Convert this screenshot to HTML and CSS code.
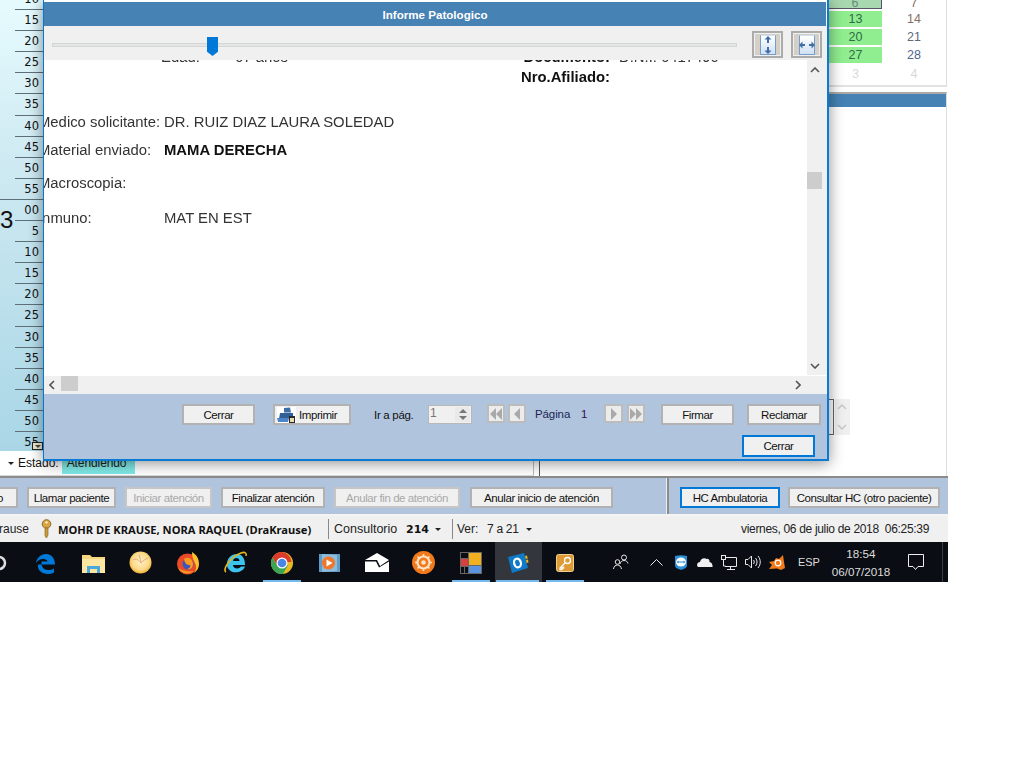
FILE: index.html
```html
<!DOCTYPE html>
<html lang="es">
<head>
<meta charset="utf-8">
<title>Informe Patologico</title>
<link rel="stylesheet" href="styles.css">
</head>
<body>
<div class="screen">
  <div class="workspace">
    <div class="agenda">
      <div class="ruler">
        <div class="tick">10</div><div class="tick">15</div><div class="tick">20</div><div class="tick">25</div><div class="tick">30</div><div class="tick">35</div><div class="tick">40</div><div class="tick">45</div><div class="tick">50</div><div class="tick hour-end">55</div>
        <div class="tick">00</div><div class="tick">5</div><div class="tick">10</div><div class="tick">15</div><div class="tick">20</div><div class="tick">25</div><div class="tick">30</div><div class="tick">35</div><div class="tick">40</div><div class="tick">45</div><div class="tick">50</div><div class="tick">55</div>
        <span class="hour">3</span>
        <span class="more"><i class="more-tri"></i></span>
      </div>
      <div class="estado">
        <span class="caret"></span><span class="estado-label">Estado:</span><span class="estado-val">Atendiendo</span>
      </div>
    </div>
    <div class="side">
      <div class="calendar">
        <div class="cal-row cal-first"><span class="day green today">6</span><span class="day c1">7</span></div>
        <div class="cal-row"><span class="day green">13</span><span class="day c1">14</span></div>
        <div class="cal-row"><span class="day green">20</span><span class="day c2">21</span></div>
        <div class="cal-row"><span class="day green">27</span><span class="day c3">28</span></div>
        <div class="cal-row cal-last"><span class="day muted">3</span><span class="day muted">4</span></div>
      </div>
      <div class="panel">
        <div class="panel-head"></div>
        <div class="panel-ctl">
          <span class="ctl-box"></span>
          <div class="spin-ghost">
            <svg width="14" height="36" viewBox="0 0 14 36"><path d="M3 10l4-4 4 4M3 26l4 4 4-4" fill="none" stroke="#c8c8c8" stroke-width="1.5"/></svg>
          </div>
        </div>
      </div>
    </div>
  </div>

  <div class="actions">
    <div class="act-left">
      <button class="btn act-0">o</button>
      <button class="btn act-1">Llamar paciente</button>
      <button class="btn off act-2">Iniciar atención</button>
      <button class="btn act-3">Finalizar atención</button>
      <button class="btn off act-4">Anular fin de atención</button>
      <button class="btn act-5">Anular inicio de atención</button>
    </div>
    <div class="act-right">
      <button class="btn focus act-6">HC Ambulatoria</button>
      <button class="btn act-7">Consultar HC (otro paciente)</button>
    </div>
  </div>

  <div class="statusbar">
    <span class="st-user">Krause</span>
    <svg class="st-key" width="13" height="20" viewBox="0 0 13 20"><circle cx="6.5" cy="5" r="4.3" fill="#d9a441" stroke="#8a6a25"/><circle cx="6.5" cy="3.4" r="1.2" fill="#fff2c8"/><path d="M5 9h3v7l-1.500 3L5 17z" fill="#c99a3c" stroke="#8a6a25" stroke-width=".7"/></svg>
    <b class="st-name">MOHR DE KRAUSE, NORA RAQUEL (DraKrause)</b>
    <span class="st-sep st-sep1"></span>
    <span class="st-cons">Consultorio</span><b class="st-num">214</b><span class="caret st-caret"></span>
    <span class="st-sep st-sep2"></span>
    <span class="st-ver">Ver:</span><span class="st-range">7 a 21</span><span class="caret st-caret"></span>
    <span class="st-date">viernes, 06 de julio de 2018&nbsp; 06:25:39</span>
  </div>

  <div class="taskbar">
    <div class="apps">
      <div class="slot"><svg width="24" height="24" viewBox="0 0 24 24"><circle cx="12" cy="12" r="6" fill="none" stroke="#ddd" stroke-width="2.500"/></svg></div>
      <div class="slot"><svg width="22" height="22" viewBox="0 0 22 22"><path d="M3 12.500h17C20 6 16 2 11 2 6 2 1.500 6 1 11c2-3 5-4.500 8-4 2 .3 3.500 1.500 3.500 2.500H6.500C6 15 9 18 13 18c2.500 0 4.500-.5 6-1.500v4c-2 1-4 1.500-6.500 1.500C7 22 2 18 3 12.500z" fill="#0078d7"/></svg></div>
      <div class="slot"><svg width="23" height="20" viewBox="0 0 23 20"><path d="M0 2h8l2 2h13v16H0z" fill="#f6d77f"/><path d="M0 6h23v14H0z" fill="#fbe6a2"/><path d="M5 20v-7h13v7h-3v-4H8v4z" fill="#4aa8dc"/></svg></div>
      <div class="slot"><svg width="23" height="23" viewBox="0 0 23 23"><defs><radialGradient id="g1" cx=".5" cy=".45" r=".55"><stop offset="0" stop-color="#fff0c8"/><stop offset=".7" stop-color="#fbd98a"/><stop offset="1" stop-color="#f0b030"/></radialGradient></defs><circle cx="11.500" cy="11.500" r="11" fill="url(#g1)"/><path d="M4 9c3-2 6 0 8 3M10 4c1 3 2 6 2 8M19 7c-3 1-5 3-7 5" fill="none" stroke="#e8a878" stroke-width="1"/></svg></div>
      <div class="slot"><svg width="24" height="24" viewBox="0 0 24 24"><circle cx="11.500" cy="13" r="10.500" fill="#ea4a2a"/><path d="M16 1c5 3 7 7 7 12 0 4-2 7-5 9 2-3 3-6 1-10-1-3-3-5-3-11z" fill="#ffc02e"/><path d="M2 17c3 6 11 7 16 3-5 1-11 0-16-3z" fill="#f59a20"/><circle cx="12" cy="13" r="5.500" fill="#3b55b8"/><path d="M8 8c4-3 9 0 9 5s-4 6-7 5c3 0 5-2 4-4-3 0-5-1-6-6z" fill="#ff9a1f"/></svg></div>
      <div class="slot"><svg width="25" height="25" viewBox="0 0 25 25"><path d="M4 15c0-7 4-11 10-11 5 0 8 4 8 11H10c0 4 6 4.500 8 1.500h4c-2 6-12 8-16 3-1.300-1.300-2-3-2-4.500zM10 11h6.500c0-4-6-4-6.500 0z" fill="#3cc4ee"/><path d="M3 22C-1 20 7 7 18 3c4-1.500 6 0 5 3" fill="none" stroke="#e4b420" stroke-width="1.600"/></svg></div>
      <div class="slot"><svg width="24" height="24" viewBox="0 0 24 24"><circle cx="12" cy="12" r="11" fill="#e8b923"/><path d="M12 1a11 11 0 0 0-9.500 5.500L8 16l4-5h9.500A11 11 0 0 0 12 1z" fill="#db3b2c"/><path d="M2.500 6.500A11 11 0 0 0 13 23l5-9-10 2z" fill="#3aa655"/><circle cx="12" cy="12" r="5.500" fill="#fff"/><circle cx="12" cy="12" r="4.300" fill="#4a86e8"/></svg></div>
      <div class="slot"><svg width="21" height="20" viewBox="0 0 21 20"><path d="M0 1h21v18H0z" fill="#5f9bc4"/><path d="M3 1l15 1v16l-15 1z" fill="#8fbbd8"/><circle cx="9.500" cy="10" r="6.500" fill="#f0762a"/><path d="M7.500 6.500l6 3.500-6 3.500z" fill="#fff"/></svg></div>
      <div class="slot"><svg width="24" height="19" viewBox="0 0 24 19"><path d="M12 0l12 7L15 13 12 7 0 7z" fill="#fff"/><path d="M0 8.500h11l3 6L24 8.500V19H0z" fill="#fff"/></svg></div>
      <div class="slot"><svg width="23" height="23" viewBox="0 0 23 23"><circle cx="11.500" cy="11.500" r="11.500" fill="#f27a1a"/><path d="M11.500 3v17M3 11.500h17M5.500 5.500l12 12M17.500 5.500l-12 12" stroke="#fde3c8" stroke-width="1.600"/><circle cx="11.500" cy="11.500" r="6" fill="#f27a1a" stroke="#fde3c8" stroke-width="2.200"/><circle cx="11.500" cy="11.500" r="2.300" fill="#fde3c8"/></svg></div>
      <div class="slot"><svg width="22" height="22" viewBox="0 0 22 22"><path d="M0 0h22v22H0z" fill="#666"/><path d="M1 1h7v5H1zM1 15h3v6H1zM5 15h3v6H5z" fill="#0b0d12"/><path d="M1 7h7v7H1z" fill="#d84040"/><path d="M9 1h12v12H9z" fill="#f0b020"/><path d="M9 14h12v7H9z" fill="#5a93e0"/></svg></div>
      <div class="slot slot-active"><svg width="22" height="22" viewBox="0 0 22 22"><path d="M1 5l16-4 4 15-16 5z" fill="#0f7ac8"/><path d="M18 4l2-.6.700 3-2 .6zM19 8l2-.5.500 3-2 .5z" fill="#e8b423"/><ellipse cx="10.500" cy="11" rx="3.400" ry="4.400" fill="none" stroke="#fff" stroke-width="2.200" transform="rotate(-14 10.500 11)"/></svg></div>
      <div class="slot"><svg width="18" height="18" viewBox="0 0 18 18"><rect x=".5" y=".5" width="17" height="17" rx="2" fill="#dd9a35" stroke="#f0d090"/><circle cx="11.500" cy="6.500" r="3" fill="none" stroke="#fff" stroke-width="1.300"/><path d="M9.500 8.500L4 14v1.500h2v-1.500h1.500v-1.500" fill="none" stroke="#fff" stroke-width="1.300"/></svg></div>
    </div>
    <div class="tray">
      <svg class="t-people" width="16" height="16" viewBox="0 0 16 16" fill="none" stroke="#e8e8e8"><circle cx="11" cy="3.500" r="2.500"/><path d="M7 10c.3-2 2-3.500 4-3.500s3.500 1 4 3"/><circle cx="4.500" cy="8" r="2.300"/><path d="M.5 15c.2-2.500 2-4 4-4s3.500 1.500 4 4"/></svg>
      <svg class="t-up" width="13" height="7" viewBox="0 0 13 7"><path d="M.5 6.500l6-6 6 6" fill="none" stroke="#e8e8e8"/></svg>
      <svg class="t-tv" width="12" height="15" viewBox="0 0 12 15"><path d="M0 1c4-1 8-1 12 0v9c0 3-3 4-6 5-3-1-6-2-6-5z" fill="#2a8fd8"/><ellipse cx="6" cy="7" rx="5" ry="4.500" fill="#fff"/><path d="M1.500 7l2-1.500v1h5v-1l2 1.500-2 1.500v-1h-5v1z" fill="#2a8fd8"/></svg>
      <svg class="t-cloud" width="16" height="10" viewBox="0 0 16 10"><path d="M1 10C-1 8 .5 5 3 5c.5-3 4-5 6.500-3C11 1 13 3 12.500 5c2 0 3.500 3 3 5z" fill="#f0f0f0"/></svg>
      <svg class="t-net" width="16" height="15" viewBox="0 0 16 15" fill="none" stroke="#e8e8e8"><path d="M4.500 2.500h11v9h-11M4 11.500h2M9.500 11.500v3M6 14.500h8"/><rect x=".5" y=".5" width="4" height="4" fill="#111"/><path d="M2.500 4.500v6.500h2"/></svg>
      <svg class="t-vol" width="17" height="14" viewBox="0 0 17 14" fill="none" stroke="#e8e8e8"><path d="M.5 4.500h2.500l3.500-3.500v12l-3.500-3.500H.5z"/><path d="M8.500 5c1 1.300 1 2.700 0 4M10.500 3c2 2.500 2 5.500 0 8M13 1c3 3.500 3 8.500 0 12"/></svg>
      <svg class="t-avast" width="16" height="15" viewBox="0 0 16 15"><path d="M14 0l1 7 1 6-4 2-4-1.500L0 14l3-4-3-3 5-1 2-3 3 1z" fill="#f27a1a"/><circle cx="9" cy="8" r="2.800" fill="none" stroke="#fff" stroke-width="1.200"/></svg>
      <span class="t-lang">ESP</span>
      <span class="t-clock"><span>18:54</span><span>06/07/2018</span></span>
      <svg class="t-note" width="16" height="17" viewBox="0 0 16 17"><path d="M.5 .5h15v12H10l-2.500 3-2.500-3H.5z" fill="none" stroke="#f0f0f0"/></svg>
      <span class="t-edge"></span>
    </div>
  </div>

  <div class="modal">
    <div class="modal-title">Informe Patologico</div>
    <div class="modal-tools">
      <div class="slider"><span class="slider-thumb"></span></div>
      <button class="fit fit-h">
        <span class="fit-page"><svg width="12" height="18" viewBox="0 0 12 18"><path d="M6 0l3.500 3.500H7V7H5V3.500H2.500zM6 18l-3.500-3.500H5V11h2v3.500h2.500z" fill="#3f6fa8"/></svg></span>
      </button>
      <button class="fit fit-w">
        <span class="fit-page"><svg width="16" height="12" viewBox="0 0 16 12"><path d="M0 6l3.500-3.500V5H6v2H3.500v2.500zM16 6l-3.500-3.500V5H10v2h2.500v2.500z" fill="#3f6fa8"/></svg></span>
      </button>
    </div>
    <div class="modal-view">
      <div class="doc-wrap">
        <div class="doc">
          <div class="doc-head">
            <span class="dh-1">Edad:</span><span class="dh-2">67 años</span><b class="dh-3">Documento:</b><span class="dh-4">D.N.I. 6417490</span>
            <b class="dh-5">Nro.Afiliado:</b>
          </div>
          <div class="doc-rows">
            <div class="doc-row r1"><span>Medico solicitante:</span><span>DR. RUIZ DIAZ LAURA SOLEDAD</span></div>
            <div class="doc-row r2"><span>Material enviado:</span><b>MAMA DERECHA</b></div>
            <div class="doc-row r3"><span>Macroscopia:</span><span></span></div>
            <div class="doc-row r4"><span>Inmuno:</span><span>MAT EN EST</span></div>
          </div>
        </div>
      </div>
      <div class="vscroll">
        <svg class="v-up" width="10" height="6" viewBox="0 0 10 6"><path d="M1 5l4-4 4 4" fill="none" stroke="#555" stroke-width="1.600"/></svg>
        <span class="v-thumb"></span>
        <svg class="v-down" width="10" height="6" viewBox="0 0 10 6"><path d="M1 1l4 4 4-4" fill="none" stroke="#555" stroke-width="1.600"/></svg>
      </div>
    </div>
    <div class="hscroll">
      <svg class="h-left" width="6" height="10" viewBox="0 0 6 10"><path d="M5 1L1 5l4 4" fill="none" stroke="#555" stroke-width="1.600"/></svg>
      <span class="h-thumb"></span>
      <svg class="h-right" width="6" height="10" viewBox="0 0 6 10"><path d="M1 1l4 4-4 4" fill="none" stroke="#555" stroke-width="1.600"/></svg>
    </div>
    <div class="modal-foot">
      <div class="foot-row">
        <button class="btn f-cerrar">Cerrar</button>
        <button class="btn f-print">
          <svg width="19" height="16" viewBox="0 0 19 16"><rect width="19" height="16" fill="#fff"/><path d="M7 1l6-.5 1 5H7z" fill="#3a6ea5"/><path d="M3 6h13v6H2z" fill="#2f5f96"/><path d="M0 11h12l-1 4H1z" fill="#4a86c8"/><path d="M12 9h6v7h-6z" fill="#2a2a2a"/><path d="M13 11h4v4h-4z" fill="#e8dcb0"/></svg>
          <span>Imprimir</span>
        </button>
        <span class="f-ir">Ir a pág.</span>
        <div class="spin"><span class="spin-val">1</span><span class="spin-btns"><i class="sp-up"></i><i class="sp-down"></i></span></div>
        <button class="nav n-first"><i class="tri-l"></i><i class="tri-l"></i></button>
        <button class="nav n-prev"><i class="tri-l"></i></button>
        <span class="f-pag">Página</span>
        <span class="f-num">1</span>
        <button class="nav n-next"><i class="tri-r"></i></button>
        <button class="nav n-last"><i class="tri-r"></i><i class="tri-r"></i></button>
        <button class="btn f-firmar">Firmar</button>
        <button class="btn f-reclamar">Reclamar</button>
      </div>
      <div class="foot-row2">
        <button class="btn focus f-close">Cerrar</button>
      </div>
    </div>
  </div>
</div>
</body>
</html>
```
FILE: styles.css
```css
* { box-sizing: border-box; }
html, body { margin: 0; padding: 0; background: #fff; }
body { width: 1024px; height: 768px; overflow: hidden; font-family: "Liberation Sans", Arial, sans-serif; font-size: 12px; color: #111; }

.screen { position: relative; width: 948px; height: 582px; overflow: hidden; display: flex; flex-direction: column; background: #fff; }

/* Background workspace */
.workspace { height: 476px; display: flex; flex: none; }
.agenda { width: 534px; flex: none; display: flex; flex-direction: column; }
.ruler { position: relative; height: 451px; width: 44px; overflow: hidden; background: linear-gradient(180deg, #e6fbfe 0%, #cfeaf2 35%, #a9d6e6 100%); flex: none; }
.tick { height: 21.1px; margin-left: 15px; border-bottom: 1px solid #5f6f78; text-align: right; padding-right: 5px; font: 11.5px/21px "DejaVu Sans", sans-serif; color: #111; position: relative; top: -11px; }
.hour-end { margin-left: 0; }
.hour { position: absolute; left: 0; top: 206px; font: 24px/28px "Liberation Sans", sans-serif; color: #111; }
.more { position: absolute; left: 32px; top: 442px; width: 11px; height: 8px; border: 1px solid #222; background: #eee8c8; display: flex; justify-content: center; align-items: center; }
.more-tri { border-left: 3px solid transparent; border-right: 3px solid transparent; border-top: 3px solid #444; }
.estado { height: 25px; display: flex; align-items: flex-start; padding-left: 8px; background: #fff; border-bottom: 1px solid #d8d8d8; border-right: 1px solid #bbb; font-size: 12px; }
.caret { width: 0; height: 0; border-left: 3.500px solid transparent; border-right: 3.500px solid transparent; border-top: 3.500px solid #222; flex: none; }
.estado .caret { margin-top: 11px; }
.estado-label { margin-left: 4px; line-height: 24px; }
.estado-val { margin-left: 3px; width: 73px; height: 23px; padding-left: 5px; line-height: 24px; background: #7fe9e6; color: #222; letter-spacing: -.1px; }

.side { flex: 1; display: flex; flex-direction: column; border-left: 1px solid #555; margin-left: 5px; padding-left: 289px; background: #fff; }
.calendar { height: 87px; width: 118px; border-right: 1px solid #ddd; border-bottom: 2px solid #e2e2e2; font-size: 13px; flex: none; }
.cal-row { display: grid; grid-template-columns: 53px 1fr; height: 18px; align-items: stretch; }
.cal-first { height: 11px; }
.cal-first .day { height: 9px; line-height: 7px; overflow: hidden; }
.cal-last { height: 21px; }
.day { text-align: center; line-height: 17px; height: 16px; font-size: 12.5px; }
.cal-last .day { line-height: 18px; height: 18px; }
.green { background: #90ee90; color: #2f6b45; }
.today { background: #a8d8b0; border-bottom: 1px solid #556; border-right: 1px solid #556; color: #6a8a7a; }
.c1 { color: #857065; }
.c2 { color: #60687a; }
.c3 { color: #50648f; }
.muted { color: #d8d8d8; }

.panel { flex: 1; margin-top: 5px; width: 118px; border-right: 1px solid #ddd; border-top: 2px solid #aaa; }
.panel-head { height: 13px; background: #4682b4; }
.panel-ctl { display: flex; gap: 1px; margin-top: 292px; }
.ctl-box { width: 5px; height: 36px; border: 1px solid #666; border-left: 0; }
.spin-ghost { width: 15px; height: 36px; background: #f0f0f0; }
.spin-ghost svg { display: block; }

/* Buttons */
.btn { font-family: "Liberation Sans", sans-serif; font-size: 11.500px; letter-spacing: -.42px; color: #111; height: 21px; padding: 0; border: 2px solid #b2b2b2; background: #f0f0f0; flex: none; display: flex; align-items: center; justify-content: center; white-space: nowrap; }
.btn.off { color: #a9a9a9; border-color: #c6c6c6; }
.btn.focus { border-color: #0078d7; }

/* Action bar */
.actions { height: 40px; flex: none; display: flex; border-top: 2px solid #8b8b8b; border-bottom: 2px solid #f4f4f4; background: #b0c4de; }
.act-left { flex: none; display: flex; gap: 9px; padding-top: 9px; margin-left: -60px; width: 727px; }
.act-right { flex: 1; display: flex; gap: 8px; padding: 9px 0 0 11px; border-left: 2px solid #8b8b8b; box-shadow: -1px 0 0 #eee; }
.act-0 { width: 78px; justify-content: flex-end; padding-right: 13px; }
.act-1 { width: 89px; }
.act-2 { width: 87px; }
.act-3 { width: 104px; }
.act-4 { width: 126px; }
.act-5 { width: 143px; margin-left: 1px; }
.act-6 { width: 100px; height: 21px; }
.act-7 { width: 152px; }

/* Status bar */
.statusbar { height: 26px; flex: none; display: flex; align-items: center; background: #f0f0f0; font-size: 12px; color: #222; }
.st-user { margin-left: -10px; margin-right: 10px; text-align: right; width: 39px; }
.st-key { margin-left: 1px; flex: none; }
.st-name { margin-left: 5px; width: 265px; font: bold 11.150px "Noto Sans", sans-serif; letter-spacing: 0; color: #111; white-space: nowrap; }
.st-sep { width: 1px; height: 20px; background: #888; flex: none; }
.st-sep1 { margin-left: 5px; }
.st-cons { margin-left: 5px; width: 72px; font-size: 12.500px; }
.st-num { width: 29px; font: bold 11px "DejaVu Sans", sans-serif; color: #111; }
.st-caret { margin-right: 11px; }
.st-ver { margin-left: 4px; width: 30px; }
.st-range { width: 39px; letter-spacing: -.3px; }
.st-date { margin-left: auto; margin-right: 19px; letter-spacing: -.32px; }

/* Taskbar */
.taskbar { height: 40px; flex: none; display: flex; background: #0a0d13; position: relative; color: #eee; }
.apps { display: flex; margin-left: -24.500px; }
.slot { position: relative; width: 47.200px; height: 40px; display: flex; align-items: center; justify-content: center; flex: none; }
.slot:nth-child(7)::after, .slot:nth-child(11)::after, .slot:nth-child(13)::after, .slot-active::after { content: ""; position: absolute; left: 4.600px; bottom: 0; width: 38px; height: 2px; background: #76b9ed; }
.slot-active { background: #33373d; }
.slot-active::after { left: 1px; width: 43px; }
.slot svg { margin-top: 1px; }
.tray { flex: 1; display: flex; align-items: center; }
.t-people { margin-left: 24px; }
.t-up { margin-left: 21px; }
.t-tv { margin-left: 12px; }
.t-cloud { margin-left: 10px; }
.t-net { margin-left: 8px; }
.t-vol { margin-left: 8px; }
.t-avast { margin-left: 7px; }
.t-lang { margin-left: 13px; font-size: 11px; width: 30px; color: #ddd; }
.t-clock { margin-left: 3px; display: flex; flex-direction: column; align-items: center; font-size: 11.700px; line-height: 18px; width: 60px; color: #ddd; padding-top: 1px; }
.t-note { margin-left: 17px; }
.t-edge { margin-left: 18px; width: 1px; height: 40px; background: #3a3d42; flex: none; }

/* Modal */
.modal { position: absolute; left: 43px; top: 0; width: 786px; height: 461px; padding-top: 2px; background: #fff; border-left: 1px solid #0078d7; border-right: 2px solid #0a7ad4; border-bottom: 2px solid #0a7ad4; box-shadow: 0 2px 14px rgba(0,0,0,.45); display: flex; flex-direction: column; }
.modal-title { height: 24px; flex: none; background: #4682b4; color: #fff; font-weight: bold; font-size: 11.600px; line-height: 26px; text-align: center; margin-right: 1px; }
.modal-tools { height: 34px; flex: none; background: #f0f0f0; display: flex; align-items: flex-start; }
.slider { position: relative; width: 685px; height: 4px; margin: 17px 0 0 8px; background: #e4e6e6; border: 1px solid #d4d6d6; }
.slider-thumb { position: absolute; left: 154px; top: -7px; width: 11px; height: 19px; background: #0078d7; clip-path: polygon(0 0, 100% 0, 100% 78%, 50% 100%, 0 78%); }
.fit { width: 31px; height: 27px; margin-top: 5px; padding: 0; border: 2px solid #ababab; background: #d4d0c8; display: flex; align-items: center; justify-content: center; box-shadow: inset 0 0 0 1px #efefef; }
.fit-h { margin-left: 15px; }
.fit-w { margin-left: 8px; }
.fit-page { width: 16px; height: 20px; display: flex; align-items: center; justify-content: center; background: linear-gradient(#fff, #cfe0f4); border: 1px solid #7a9cc8; border-top-color: #cfe0f4; }
.fit-page svg { flex: none; }

.modal-view { height: 315px; flex: none; display: flex; overflow: hidden; }
.doc-wrap { width: 763px; flex: none; overflow: hidden; background: #fff; }
.doc { margin: -13px 0 0 -6px; font-size: 14.850px; color: #333; filter: blur(.35px); }
.doc b { color: #111; }
.doc-head { display: grid; grid-template-columns: 123px 74px 180px 195px 1fr; grid-auto-rows: 20px; line-height: 20px; white-space: nowrap; }
.dh-1 { grid-column: 2; }
.dh-2 { grid-column: 3; }
.dh-3 { grid-column: 4; text-align: right; }
.dh-4 { grid-column: 5; padding-left: 9px; }
.dh-5 { grid-column: 4; text-align: right; }
.doc-rows { display: flex; flex-direction: column; }
.doc-row { display: grid; grid-template-columns: 126px 1fr; height: 20px; line-height: 20px; white-space: nowrap; }
.r1 { margin-top: 25px; }
.r2 { margin-top: 8px; }
.r3 { margin-top: 13px; }
.r4 { margin-top: 15px; }
.vscroll { flex: 1; position: relative; background: #f0f0f0; }
.v-up { position: absolute; left: 3px; top: 7px; }
.v-thumb { position: absolute; left: 0; top: 112px; width: 15px; height: 17px; background: #cdcdcd; }
.v-down { position: absolute; left: 3px; top: 303px; }

.hscroll { height: 18px; flex: none; position: relative; margin-top: 1px; background: #f0f0f0; }
.h-left { position: absolute; left: 5px; top: 4px; }
.h-thumb { position: absolute; left: 17px; top: 0; width: 17px; height: 15px; background: #cdcdcd; }
.h-right { position: absolute; left: 751px; top: 4px; }

.modal-foot { flex: 1; background: #b0c4de; padding: 10px 0 0 0; color: #111; }
.foot-row { display: flex; align-items: flex-start; height: 31px; }
.foot-row2 { display: flex; height: 22px; }
.f-cerrar { width: 73px; margin-left: 138px; }
.f-print { width: 78px; margin-left: 18px; gap: 3px; justify-content: flex-start; padding-left: 2px; }
.f-print svg { flex: none; }
.f-ir { margin-left: 23px; width: 54px; line-height: 22px; font-size: 11.500px; letter-spacing: -.3px; }
.spin { width: 44px; height: 19px; margin-top: 1px; border: 1px solid #b8b8b8; background: #f0f0f0; display: flex; justify-content: space-between; }
.spin-val { padding-left: 1px; font-size: 12px; line-height: 14px; color: #777; }
.spin-btns { width: 15px; display: flex; flex-direction: column; align-items: center; justify-content: center; gap: 3px; background: #e9e9e9; margin: 1px; }
.sp-up { border-left: 4px solid transparent; border-right: 4px solid transparent; border-bottom: 4px solid #777; }
.sp-down { border-left: 4px solid transparent; border-right: 4px solid transparent; border-top: 4px solid #777; }
.nav { width: 18px; height: 19px; padding: 0; border: 2px solid #bcbcbc; background: #ececec; display: flex; align-items: center; justify-content: center; flex: none; }
.nav i { display: block; border-top: 6px solid transparent; border-bottom: 6px solid transparent; }
.tri-l { border-right: 6px solid #a9a9a9; }
.tri-r { border-left: 6px solid #a9a9a9; }
.n-first { margin-left: 15px; }
.n-prev { margin-left: 3px; }
.f-pag { margin-left: 9px; width: 46px; line-height: 21px; font-size: 11.500px; letter-spacing: -.1px; color: #1c2450; }
.f-num { width: 23px; line-height: 21px; font-size: 11.500px; color: #301050; }
.n-next { width: 19px; }
.n-last { margin-left: 4px; }
.f-firmar { width: 73px; margin-left: 16px; }
.f-reclamar { width: 74px; margin-left: 13px; }
.f-close { width: 73px; height: 22px; margin-left: 698px; }
```
